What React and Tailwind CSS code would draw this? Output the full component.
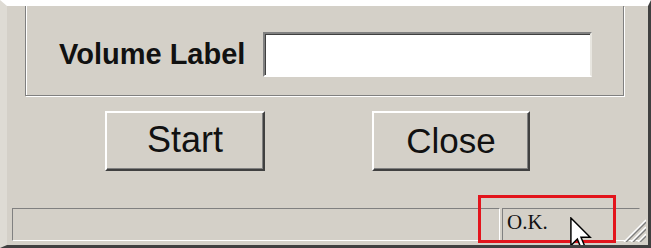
export default function App() {
  return (
    <div className="relative w-[651px] h-[248px] overflow-hidden bg-[#d4d0c8] border-t-[6px] border-t-white border-l-[7px] border-l-[#dedbd4] border-r-[3px] border-r-[#404040] border-b-[3px] border-b-[#404040] flex flex-col font-['Liberation_Sans',Arial,sans-serif] text-[#111]">
      {/* Group box (top edge cut off) */}
      <div className="ml-[18px] w-[599px] h-[90px] shrink-0 border-l border-r border-b border-[#808080] shadow-[inset_1px_0_0_#fff,1px_1px_0_#fff] pt-[26px] pl-[33px] flex items-start">
        <div className="flex items-center">
          <div className="w-[204px] text-[29px] font-bold leading-none">Volume Label</div>
          <div className="w-[329px] h-[45px] bg-white border-2 border-t-[#808080] border-l-[#808080] border-b-white border-r-[#e8e6e0] shadow-[inset_1px_1px_0_#404040]" />
        </div>
      </div>

      {/* Buttons */}
      <div className="mt-[15px] ml-[98px] flex items-start shrink-0">
        <button className="w-[160px] h-[60px] bg-[#d4d0c8] border-2 border-t-white border-l-white border-b-[#404040] border-r-[#404040] shadow-[inset_-1px_-1px_0_#808080] text-[36px] leading-none pb-[2px]">
          Start
        </button>
        <button className="ml-[107px] w-[158px] h-[60px] bg-[#d4d0c8] border-2 border-t-white border-l-white border-b-[#404040] border-r-[#404040] shadow-[inset_-1px_-1px_0_#808080] text-[35px] leading-none pb-[2px]">
          Close
        </button>
      </div>

      {/* Status bar */}
      <div className="mt-[37px] ml-[5px] flex shrink-0">
        <div className="w-[488px] h-[33px] border border-t-[#808080] border-l-[#808080] border-b-white border-r-white" />
        <div className="ml-[2px] w-[138px] h-[33px] border border-t-[#808080] border-l-[#808080] border-b-white border-r-[#d4d0c8] pl-[4px] font-['Liberation_Serif','Times_New_Roman',serif] text-[21px] leading-[20px] pt-[3px]">
          O.K.
        </div>
      </div>

      {/* Size grip */}
      <svg className="absolute right-[2px] bottom-[3px]" width="24" height="24" viewBox="0 0 24 24">
        {[0, 7, 14].map((o) => (
          <g key={o}>
            <line x1={24 - o - 6} y1="24" x2="24" y2={24 - o - 6} stroke="#808080" strokeWidth="1.6" />
            <line x1={24 - o - 8} y1="24" x2="24" y2={24 - o - 8} stroke="#ffffff" strokeWidth="1.4" />
          </g>
        ))}
      </svg>

      {/* Highlight rectangle */}
      <div className="absolute left-[471px] top-[189px] w-[138px] h-[48px] border-[3px] border-[#e3141c]" />

      {/* Mouse cursor */}
      <svg className="absolute left-[563px] top-[211px]" width="22" height="35" viewBox="0 0 12 19">
        <path d="M0.5 0.5 L0.5 15.5 L4 12 L6.5 18 L8.5 17 L6 11 L11 11 Z" fill="#fff" stroke="#000" strokeWidth="0.8" strokeLinejoin="miter" />
      </svg>
    </div>
  )
}
